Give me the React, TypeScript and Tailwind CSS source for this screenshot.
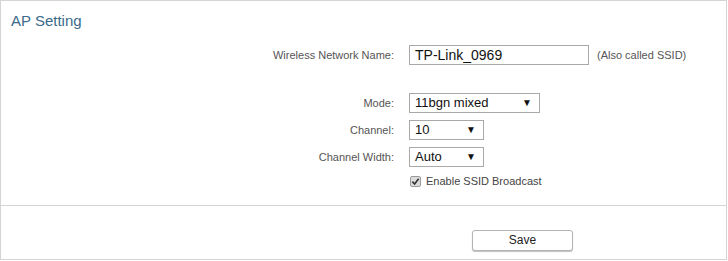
import React from 'react';

function FakeSelect({ value, width }: { value: string; width: string }) {
  return (
    <div
      className={`${width} h-[20px] flex items-center justify-between border border-[#a9a9a9] bg-white pl-[5px] pr-[7px] text-[13px] text-[#111]`}
    >
      <span>{value}</span>
      <span className="text-[10px] leading-none">▼</span>
    </div>
  );
}

function Row({ label, children, className = '' }: { label: string; children: React.ReactNode; className?: string }) {
  return (
    <div className={`flex items-center ${className}`}>
      <div className="w-[393px] text-right text-[11px] text-[#555]">{label}</div>
      <div className="ml-[15px] flex items-center">{children}</div>
    </div>
  );
}

export default function App() {
  return (
    <div
      className="w-[728px] h-[261px] bg-white"
      style={{ fontFamily: '"Liberation Sans", Arial, sans-serif' }}
    >
      <div className="w-[727px] h-[260px] border border-[#d4d4d4] flex flex-col">
        {/* Settings */}
        <div className="h-[205px] border-b border-[#d4d4d4]">
          <h2 className="pl-[10px] pt-[11px] text-[15px] leading-[18px] text-[#3b6b8a]">AP Setting</h2>

          <Row label="Wireless Network Name:" className="mt-[15px] h-[20px]">
            <div className="w-[180px] h-[20px] border border-[#a9a9a9] bg-white pl-[5px] flex items-center text-[14px] text-[#111]">
              TP-Link_0969
            </div>
            <span className="ml-[8px] text-[11px] text-[#555]">(Also called SSID)</span>
          </Row>

          <Row label="Mode:" className="mt-[28px] h-[20px]">
            <FakeSelect value="11bgn mixed" width="w-[131px]" />
          </Row>

          <Row label="Channel:" className="mt-[7px] h-[20px]">
            <FakeSelect value="10" width="w-[75px]" />
          </Row>

          <Row label="Channel Width:" className="mt-[7px] h-[20px]">
            <FakeSelect value="Auto" width="w-[75px]" />
          </Row>

          <div className="mt-[6px] ml-[409px] flex items-center h-[16px]">
            <div className="w-[11px] h-[11px] rounded-[2px] border border-[#9a9a9a] bg-[#dcdcdc] flex items-center justify-center">
              <svg width="9" height="9" viewBox="0 0 10 10">
                <path d="M1.5 5.2 L4 7.8 L8.5 2" fill="none" stroke="#333" strokeWidth="1.8" />
              </svg>
            </div>
            <span className="ml-[5px] text-[11px] text-[#444]">Enable SSID Broadcast</span>
          </div>
        </div>

        {/* Actions */}
        <div className="flex-1 pl-[471px] pt-[21px]">
          <button className="w-[101px] h-[21px] rounded-[3px] border border-[#b4b4b4] bg-white text-[12px] text-[#222] shadow-[0_1px_1px_rgba(0,0,0,0.25)]">
            Save
          </button>
        </div>
      </div>
    </div>
  );
}
